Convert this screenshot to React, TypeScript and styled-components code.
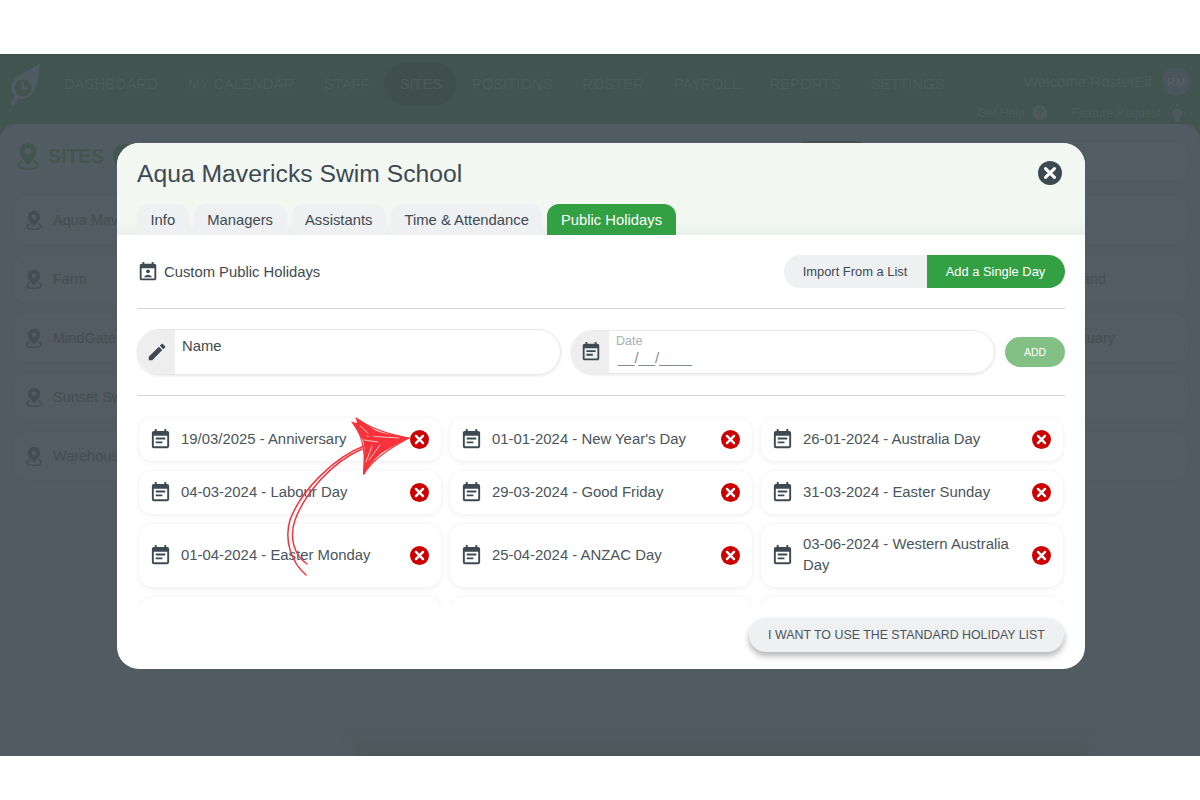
import styled, { createGlobalStyle } from 'styled-components';
import { MdEdit, MdEventNote, MdHelp, MdWbIncandescent } from 'react-icons/md';

const navItems = ['DASHBOARD', 'MY CALENDAR', 'STAFF', 'SITES', 'POSITIONS', 'ROSTER', 'PAYROLL', 'REPORTS', 'SETTINGS'];
const tabs = ['Info', 'Managers', 'Assistants', 'Time & Attendance', 'Public Holidays'];

// only what shows around the modal
const sites = [
  { left: 'Aqua Mav', right: '', inset: 0 },
  { left: 'Farm', right: 'and', inset: 82 },
  { left: 'MindGate', right: 'tuary', inset: 73 },
  { left: 'Sunset Sw', right: '', inset: 0 },
  { left: 'Warehous', right: '', inset: 0 },
];

const holidays = [
  '19/03/2025 - Anniversary',
  "01-01-2024 - New Year's Day",
  '26-01-2024 - Australia Day',
  '04-03-2024 - Labour Day',
  '29-03-2024 - Good Friday',
  '31-03-2024 - Easter Sunday',
  '01-04-2024 - Easter Monday',
  '25-04-2024 - ANZAC Day',
  '03-06-2024 - Western Australia Day',
  '',
  '',
  '',
];

function RoundX({ size, color }: { size: number; color: string }) {
  return (
    <svg width={size} height={size} viewBox="0 0 20 20">
      <circle cx="10" cy="10" r="10" fill={color} />
      <path d="M6.3 6.3l7.4 7.4M13.7 6.3l-7.4 7.4" stroke="#fff" strokeWidth="2.6" strokeLinecap="round" />
    </svg>
  );
}

function Pin({ size }: { size: number }) {
  return (
    <svg width={size} height={size} viewBox="0 0 24 24" fill="currentColor">
      <path d="M12 .8a7.4 7.4 0 0 0-7.4 7.4C4.600 13.500 12 19.800 12 19.800s7.400-6.300 7.400-11.600A7.400 7.400 0 0 0 12 .8zm0 10.200a2.800 2.800 0 1 1 0-5.600 2.800 2.800 0 0 1 0 5.600z" />
      <path
        d="M6.800 16.400C4.400 17.200 3.400 18.400 3.400 19.700c0 2 3.800 3.400 8.600 3.400s8.600-1.400 8.600-3.400c0-1.300-1-2.500-3.400-3.300"
        fill="none"
        stroke="currentColor"
        strokeWidth="1.800"
      />
    </svg>
  );
}

function CalendarPerson({ size }: { size: number }) {
  return (
    <svg width={size} height={size} viewBox="0 0 24 24" fill="currentColor">
      <path d="M19 3h-1V1h-2v2H8V1H6v2H5c-1.100 0-2 .9-2 2v14c0 1.100.9 2 2 2h14c1.100 0 2-.9 2-2V5c0-1.100-.9-2-2-2zm0 16H5V8h14z" />
      <circle cx="12" cy="11.300" r="2.100" />
      <path d="M7.800 17.800c0-1.700 2.800-2.700 4.200-2.700s4.200 1 4.200 2.700z" />
    </svg>
  );
}

function Logo() {
  return (
    <svg width="32" height="46" viewBox="0 0 32 46">
      <path
        d="M30 1C29 11 28 21 24 29C21 35 15 38 9 37L3 44L0 41L5 35C0 30 0 23 4 18C9 11 21 8 30 1Z"
        fill="#4f5b60"
      />
      <circle cx="13" cy="26" r="8.500" fill="#42544f" />
      <path d="M13 20v6.500h6" stroke="#4f5b60" strokeWidth="2" fill="none" />
    </svg>
  );
}

function Arrow() {
  return (
    <ArrowSvg width="140" height="175" viewBox="280 410 140 175">
      <g fill="none" stroke="#f7323a" strokeLinecap="round">
        <path d="M364 446C335 457 301 490 290 520C284 540 291 562 306 575" strokeWidth="1.500" />
        <path d="M362 449C332 462 305 493 295 520C289 538 294 555 307 564" strokeWidth="1.500" />
      </g>
      <path
        d="M409 438C395 434 388 435 377 431C369 427 362 420 356 418L357 423L352 422C356 430 362 436 364 444C365 455 363 465 363 475C370 465 376 456 385 451C393 446 401 442 409 438Z"
        fill="#f7323a"
      />
      <g fill="none" stroke="#fff" strokeWidth="0.700" strokeLinecap="round">
        <path d="M364 440L378 442" />
        <path d="M367 436L399 438" />
        <path d="M372 446L366 462" />
        <path d="M380 445L369 460" />
        <path d="M360 426L368 433" />
      </g>
      <g fill="none" stroke="#f7323a" strokeWidth="1.200" strokeLinecap="round">
        <path d="M356 418C372 430 392 435 409 438" />
        <path d="M352 422C360 432 366 445 364 474" />
        <path d="M364 474C372 460 390 448 409 438" />
        <path d="M355 424C368 440 380 440 405 439" />
      </g>
    </ArrowSvg>
  );
}

export default function App() {
  return (
    <>
      <GlobalStyle />
      <Stage>
        <TopBar>
          <LogoSlot>
            <Logo />
          </LogoSlot>
          <Nav>
            {navItems.map(item => (
              <NavItem key={item} $active={item === 'SITES'}>
                {item}
              </NavItem>
            ))}
          </Nav>
          <UserBlock>
            <WelcomeRow>
              Welcome RosterElf
              <Avatar>RM</Avatar>
            </WelcomeRow>
            <HelpRow>
              <HelpLink>
                Get Help <MdHelp size={18} />
              </HelpLink>
              <HelpLink>
                Feature Request <BulbIcon size={20} />
              </HelpLink>
            </HelpRow>
          </UserBlock>
        </TopBar>

        <SitesPanel>
          <SitesHead>
            <SitesTitle>
              <Pin size={28} />
              SITES
              <CountDot />
            </SitesTitle>
            <SearchButton />
            <SearchBox />
          </SitesHead>
          <SitesGrid>
            {sites.map(site => (
              <SiteRow key={site.left}>
                <SiteCard>
                  <Pin size={20} />
                  <span>{site.left}</span>
                </SiteCard>
                <SiteCard />
                <SiteCard style={{ justifyContent: 'flex-end', paddingRight: site.inset }}>
                  <span>{site.right}</span>
                </SiteCard>
              </SiteRow>
            ))}
          </SitesGrid>
          <PanelFoot />
        </SitesPanel>

        <Modal>
          <ModalHead>
            <TitleRow>
              <ModalTitle>Aqua Mavericks Swim School</ModalTitle>
              <RoundX size={24} color="#3d4a52" />
            </TitleRow>
            <TabRow>
              {tabs.map(tab => (
                <Tab key={tab} $active={tab === 'Public Holidays'}>
                  {tab}
                </Tab>
              ))}
            </TabRow>
          </ModalHead>

          <ModalBody>
            <ToolRow>
              <SectionLabel>
                <CalendarPerson size={22} />
                Custom Public Holidays
              </SectionLabel>
              <Segmented>
                <SegmentButton>Import From a List</SegmentButton>
                <SegmentButton $active>Add a Single Day</SegmentButton>
              </Segmented>
            </ToolRow>
            <Divider />
            <InputRow>
              <InputPill $tall>
                <InputIcon>
                  <MdEdit size={22} />
                </InputIcon>
                <NameText>Name</NameText>
              </InputPill>
              <InputPill>
                <InputIcon>
                  <MdEventNote size={22} />
                </InputIcon>
                <DateField>
                  <DateLabel>Date</DateLabel>
                  <DateMask>__/__/____</DateMask>
                </DateField>
              </InputPill>
              <AddButton>ADD</AddButton>
            </InputRow>
            <Divider />
            <HolidayList>
              <HolidayGrid>
                {holidays.map((holiday, i) => (
                  <HolidayCard key={i}>
                    {holiday && (
                      <>
                        <MdEventNote size={23} />
                        <HolidayName>{holiday}</HolidayName>
                        <RoundX size={19} color="#cc0000" />
                      </>
                    )}
                  </HolidayCard>
                ))}
              </HolidayGrid>
            </HolidayList>
            <FootRow>
              <StandardButton>I WANT TO USE THE STANDARD HOLIDAY LIST</StandardButton>
            </FootRow>
          </ModalBody>
        </Modal>

        <Arrow />
      </Stage>
    </>
  );
}

const GlobalStyle = createGlobalStyle`
  html, body {
    margin: 0;
    padding: 0;
    background: #fff;
  }
  body {
    font-family: "Liberation Sans", Arial, sans-serif;
  }
  * {
    box-sizing: border-box;
  }
`;

const Stage = styled.div`
  position: relative;
  width: 1200px;
  height: 800px;
  padding: 54px 0 44px;
  display: flex;
  flex-direction: column;
  overflow: hidden;
  background: #fff;
`;

const TopBar = styled.header`
  height: 86px;
  margin-bottom: -16px;
  padding: 8px 9px 0 10px;
  display: flex;
  align-items: flex-start;
  background: #42544f;
  color: #4e5a5d;
`;

const LogoSlot = styled.div`
  width: 40px;
  height: 44px;
`;

const Nav = styled.nav`
  display: flex;
  gap: 1.75px;
`;

const NavItem = styled.div<{ $active?: boolean }>`
  height: 44px;
  padding: 0 14px;
  display: flex;
  align-items: center;
  font-size: 14.8px;
  border-radius: 22px;
  background: ${p => (p.$active ? '#404f4c' : 'transparent')};
`;

const UserBlock = styled.div`
  margin-left: auto;
  padding-top: 5px;
  display: flex;
  flex-direction: column;
  align-items: flex-end;
`;

const WelcomeRow = styled.div`
  display: flex;
  align-items: center;
  gap: 10px;
  font-size: 15px;
`;

const Avatar = styled.div`
  width: 29px;
  height: 29px;
  border-radius: 50%;
  display: flex;
  align-items: center;
  justify-content: center;
  color: #566267;
  background: #4a565b;
  font-size: 11px;
  letter-spacing: 1px;
`;

const HelpRow = styled.div`
  margin-top: 7px;
  padding-right: 4px;
  display: flex;
  gap: 23px;
`;

const HelpLink = styled.div`
  height: 20px;
  display: flex;
  align-items: center;
  gap: 6px;
  font-size: 12px;
`;

const BulbIcon = styled(MdWbIncandescent)`
  transform: rotate(180deg);
`;

const SitesPanel = styled.main`
  flex: 1;
  padding: 18px 12px 0 14px;
  display: flex;
  flex-direction: column;
  overflow: hidden;
  background: #515c62;
  border-radius: 16px 16px 0 0;
`;

const SitesHead = styled.div`
  height: 40px;
  display: flex;
  align-items: flex-start;
`;

const SitesTitle = styled.h2`
  margin: 0;
  display: flex;
  align-items: center;
  gap: 6px;
  font-size: 19.5px;
  font-weight: 700;
  color: #42554e;
`;

const CountDot = styled.span`
  width: 24px;
  height: 24px;
  margin-left: 3px;
  border-radius: 50%;
  background: #42554e;
`;

const SearchButton = styled.div`
  width: 66px;
  height: 30px;
  margin: -1px 13px 0 auto;
  border-radius: 8px;
  background: #444f53;
`;

const SearchBox = styled.div`
  width: 310px;
  height: 38px;
  border-radius: 12px;
  background: #525d63;
  box-shadow: 0 0 3px rgba(0, 0, 0, 0.03);
`;

const SitesGrid = styled.div`
  margin-top: 14px;
  display: flex;
  flex-direction: column;
  gap: 11px;
`;

const SiteRow = styled.div`
  display: grid;
  grid-template-columns: repeat(3, 1fr);
  gap: 14px;
`;

const SiteCard = styled.div`
  height: 48px;
  padding: 0 10px;
  display: flex;
  align-items: center;
  gap: 9px;
  font-size: 14.5px;
  color: #434e54;
  border-radius: 12px;
  background: #525c62;
  box-shadow: 0 0 3px rgba(0, 0, 0, 0.03);
`;

const PanelFoot = styled.div`
  height: 28px;
  margin: auto 100px -6px 340px;
  background: linear-gradient(to bottom, rgba(75, 84, 89, 0), #4a5358);
  filter: blur(6px);
`;

const Modal = styled.section`
  position: absolute;
  left: 117px;
  top: 143px;
  width: 968px;
  height: 526px;
  display: flex;
  flex-direction: column;
  border-radius: 22px;
  overflow: hidden;
  background: #fff;
`;

const ModalHead = styled.div`
  height: 92px;
  padding: 18px 23px 0 20px;
  display: flex;
  flex-direction: column;
  background: linear-gradient(to bottom, #f2f7f2 85%, #e9f0ea);
`;

const TitleRow = styled.div`
  height: 24px;
  display: flex;
  align-items: center;
  justify-content: space-between;
`;

const ModalTitle = styled.h1`
  margin: 2px 0 0;
  font-size: 24.7px;
  font-weight: 400;
  color: #3d4a52;
`;

const TabRow = styled.div`
  margin-top: auto;
  display: flex;
  gap: 5px;
`;

const Tab = styled.div<{ $active?: boolean }>`
  height: 31px;
  padding: 0 13.5px;
  display: flex;
  align-items: center;
  font-size: 14.8px;
  border-radius: 12px 12px 0 0;
  color: ${p => (p.$active ? '#fff' : '#3f4a52')};
  background: ${p => (p.$active ? '#32a043' : '#eef0f2')};
`;

const ModalBody = styled.div`
  flex: 1;
  padding: 20px 20px 17px;
  display: flex;
  flex-direction: column;
`;

const ToolRow = styled.div`
  height: 33px;
  display: flex;
  align-items: center;
  justify-content: space-between;
`;

const SectionLabel = styled.div`
  display: flex;
  align-items: center;
  gap: 5px;
  font-size: 14.8px;
  color: #3f4a52;

  svg {
    color: #3d4a52;
  }
`;

const Segmented = styled.div`
  display: flex;
  border-radius: 17px;
  overflow: hidden;
`;

const SegmentButton = styled.div<{ $active?: boolean }>`
  height: 33px;
  width: ${p => (p.$active ? '138px' : '143px')};
  padding-right: 1px;
  display: flex;
  align-items: center;
  justify-content: center;
  font-size: 12.9px;
  color: ${p => (p.$active ? '#fff' : '#3d4a52')};
  background: ${p => (p.$active ? '#32a043' : '#eef0f2')};
`;

const Divider = styled.hr`
  width: 100%;
  height: 1px;
  margin: 20px 0 0;
  border: 0;
  background: #d2d5d5;
  flex: none;
`;

const InputRow = styled.div`
  height: 46px;
  margin-top: 20px;
  display: flex;
  align-items: center;
  gap: 10px;
`;

const InputPill = styled.div<{ $tall?: boolean }>`
  width: 424px;
  height: ${p => (p.$tall ? '46px' : '44px')};
  display: flex;
  border: 1px solid #e8e8e8;
  border-radius: 23px;
  overflow: hidden;
  box-shadow: 0 1px 3px rgba(0, 0, 0, 0.1);
`;

const InputIcon = styled.div`
  width: 37px;
  display: flex;
  align-items: center;
  justify-content: center;
  flex: none;
  color: #3d4a52;
  background: #eeeeee;
`;

const NameText = styled.div`
  padding: 8px 0 0 7px;
  font-size: 14.8px;
  color: #3f4a52;
`;

const DateField = styled.div`
  padding: 3px 0 0 7px;
`;

const DateLabel = styled.div`
  font-size: 12.5px;
  line-height: 14px;
  color: #a9adb0;
`;

const DateMask = styled.div`
  margin-top: 1px;
  padding-left: 2px;
  font-size: 14.8px;
  line-height: 18px;
  color: #858c90;
`;

const AddButton = styled.div`
  width: 60px;
  height: 30px;
  display: flex;
  align-items: center;
  justify-content: center;
  font-size: 10.5px;
  color: #fff;
  border-radius: 15px;
  background: #82c086;
`;

const HolidayList = styled.div`
  height: 199px;
  margin-top: 10px;
  padding: 12px 2px 0;
  overflow: hidden;
  flex: none;
`;

const HolidayGrid = styled.div`
  display: grid;
  grid-template-columns: repeat(3, 302px);
  gap: 10px 9px;
`;

const HolidayCard = styled.div`
  min-height: 43px;
  padding: 10px 12px 10px 10px;
  display: flex;
  align-items: center;
  gap: 9px;
  border-radius: 14px;
  background: #fff;
  box-shadow: 0 1px 6px rgba(0, 0, 0, 0.08);

  > svg:first-child {
    flex: none;
    color: #3d4a52;
  }

  > svg:last-child {
    flex: none;
    margin-left: auto;
  }
`;

const HolidayName = styled.div`
  flex: 1;
  padding: 0 10px 1px 0;
  font-size: 14.9px;
  line-height: 21px;
  color: #4a555c;
`;

const FootRow = styled.div`
  margin-top: 13px;
  display: flex;
  justify-content: flex-end;
`;

const StandardButton = styled.div`
  width: 315px;
  height: 34px;
  margin-right: 1px;
  display: flex;
  align-items: center;
  justify-content: center;
  font-size: 12.4px;
  color: #4a555c;
  border-radius: 17px;
  background: #eef0f2;
  box-shadow: 0 4px 6px rgba(0, 0, 0, 0.3);
`;

const ArrowSvg = styled.svg`
  position: absolute;
  left: 280px;
  top: 410px;
  pointer-events: none;
`;
